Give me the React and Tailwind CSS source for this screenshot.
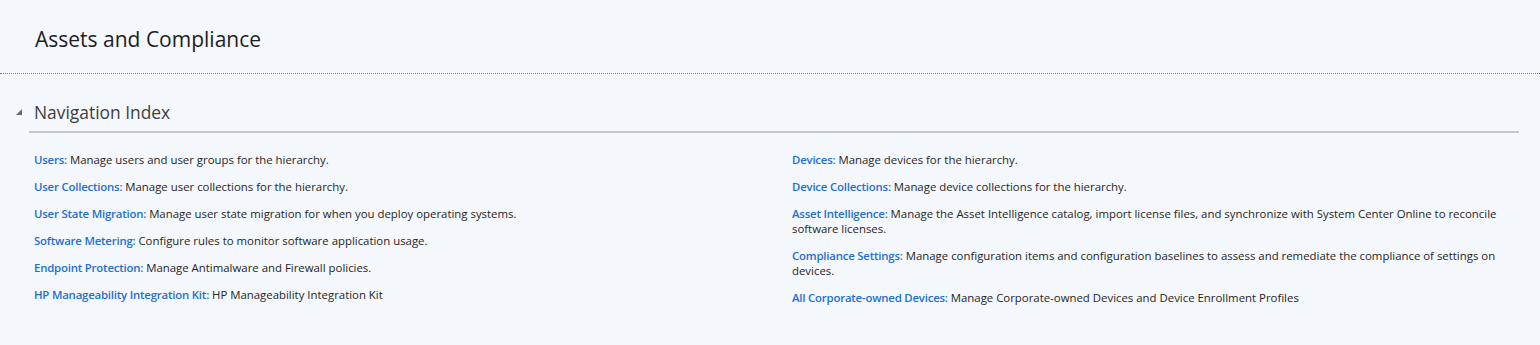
import React from 'react';

const leftItems = [
    { name: 'Users', desc: 'Manage users and user groups for the hierarchy.' },
    { name: 'User Collections', desc: 'Manage user collections for the hierarchy.' },
    { name: 'User State Migration', desc: 'Manage user state migration for when you deploy operating systems.' },
    { name: 'Software Metering', desc: 'Configure rules to monitor software application usage.' },
    { name: 'Endpoint Protection', desc: 'Manage Antimalware and Firewall policies.' },
    { name: 'HP Manageability Integration Kit', desc: 'HP Manageability Integration Kit' },
];

const rightItems = [
    { name: 'Devices', desc: 'Manage devices for the hierarchy.' },
    { name: 'Device Collections', desc: 'Manage device collections for the hierarchy.' },
    { name: 'Asset Intelligence', desc: 'Manage the Asset Intelligence catalog, import license files, and synchronize with System Center Online to reconcile software licenses.' },
    { name: 'Compliance Settings', desc: 'Manage configuration items and configuration baselines to assess and remediate the compliance of settings on devices.' },
    { name: 'All Corporate-owned Devices', desc: 'Manage Corporate-owned Devices and Device Enrollment Profiles' },
];

function NavItem({ item }) {
    return (
        <li className="text-[11.4px] leading-[15px] text-[#262626]">
            <a href="#" className="font-semibold tracking-[-0.2px] text-[#1d70d0] hover:underline">{item.name}:</a> {item.desc}
        </li>
    );
}

export default function App() {
    return (
        <div className="min-h-screen bg-[#f4f7fc] font-['Segoe_UI','Open_Sans',sans-serif]">
            <div className="h-[74px] flex items-center px-[35px] border-b border-dotted border-[#7a7a7a]">
                <h1 className="text-[21px] text-[#1e1e1e] mt-[6px]">Assets and Compliance</h1>
            </div>

            <div className="pl-[16px] pr-[21px] pt-[25px]">
                <div className="flex items-center h-[26px]">
                    <svg width="7" height="7" viewBox="0 0 7 7" className="mt-[1px]">
                        <polygon points="6,0 6,6 0,6" fill="#6b6b6b" />
                    </svg>
                    <h2 className="ml-[11px] text-[17.4px] text-[#404040]">Navigation Index</h2>
                </div>
                <div className="ml-[13px] mt-[6px] h-[2px] bg-[#c4c7cd]" />
            </div>

            <div className="grid grid-cols-[758px_1fr] pl-[34px] pr-[30px] pt-[19px]">
                <ul className="flex flex-col gap-[12px]">
                    {leftItems.map(item => (
                        <NavItem key={item.name} item={item} />
                    ))}
                </ul>
                <ul className="flex flex-col gap-[12px] max-w-[716px]">
                    {rightItems.map(item => (
                        <NavItem key={item.name} item={item} />
                    ))}
                </ul>
            </div>
        </div>
    );
}
